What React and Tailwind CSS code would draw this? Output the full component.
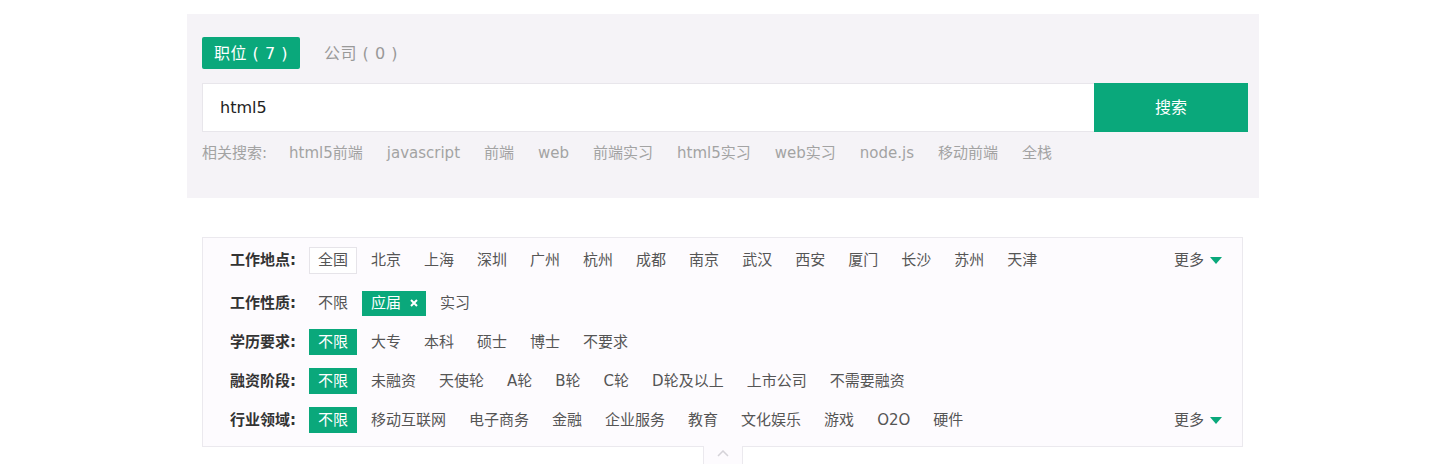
import { useState } from "react";

const GREEN = "bg-[#0aa87b]";

const related = ["html5前端", "javascript", "前端", "web", "前端实习", "html5实习", "web实习", "node.js", "移动前端", "全栈"];

const filters = [
  {
    label: "工作地点",
    items: ["全国", "北京", "上海", "深圳", "广州", "杭州", "成都", "南京", "武汉", "西安", "厦门", "长沙", "苏州", "天津"],
    active: "全国",
    style: "outline",
    more: true,
    mt: "mt-[9px]",
  },
  {
    label: "工作性质",
    items: ["不限", "应届", "实习"],
    active: "应届",
    style: "chip",
    mt: "mt-[16px]",
  },
  {
    label: "学历要求",
    items: ["不限", "大专", "本科", "硕士", "博士", "不要求"],
    active: "不限",
    style: "solid",
    mt: "mt-[13px]",
  },
  {
    label: "融资阶段",
    items: ["不限", "未融资", "天使轮", "A轮", "B轮", "C轮", "D轮及以上", "上市公司", "不需要融资"],
    active: "不限",
    style: "solid",
    mt: "mt-[13px]",
  },
  {
    label: "行业领域",
    items: ["不限", "移动互联网", "电子商务", "金融", "企业服务", "教育", "文化娱乐", "游戏", "O2O", "硬件"],
    active: "不限",
    style: "solid",
    more: true,
    mt: "mt-[13px]",
  },
];

const Caret = () => (
  <svg width="12" height="7" viewBox="0 0 12 7" className="ml-[6px]">
    <path d="M0 0 L12 0 L6 7 Z" fill="#0aa87b" />
  </svg>
);

const FilterItem = ({ text, active, style }) => {
  if (active && style === "outline") {
    return (
      <span className="h-[27px] px-[8px] flex items-center border border-[#e6e4e9] bg-white text-[#555]">
        {text}
      </span>
    );
  }
  if (active && style === "chip") {
    return (
      <span className={`h-[25px] pl-[9px] pr-[8px] flex items-center ${GREEN} text-white`}>
        {text}
        <svg width="8" height="8" viewBox="0 0 8 8" className="ml-[9px]">
          <path d="M1 1 L7 7 M7 1 L1 7" stroke="white" strokeWidth="2" />
        </svg>
      </span>
    );
  }
  if (active) {
    return (
      <span className={`h-[26px] px-[9px] flex items-center ${GREEN} text-white`}>{text}</span>
    );
  }
  return <span className="h-[26px] px-[9px] flex items-center text-[#555] cursor-pointer">{text}</span>;
};

export default function App() {
  const [tab, setTab] = useState("job");
  const [query, setQuery] = useState("html5");

  return (
    <div className="w-[1440px] h-[464px] bg-white overflow-hidden font-['DejaVu_Sans','Noto_Sans_CJK_SC',sans-serif]">
      <div className="w-[1072px] ml-[187px] pt-[14px]">
        {/* search panel */}
        <div className="bg-[#f5f3f7] h-[184px] pl-[15px] pr-[11px] pt-[23px]">
          <div className="flex items-center text-[16px]">
            <button
              onClick={() => setTab("job")}
              className={`h-[32px] w-[98px] flex items-center justify-center rounded-[2px] tracking-[0.5px] pt-[1px] ${tab === "job" ? GREEN + " text-white" : "text-[#999]"}`}
            >
              职位 ( 7 )
            </button>
            <button
              onClick={() => setTab("company")}
              className={`h-[32px] ml-[16px] px-[8px] flex items-center tracking-[0.5px] pt-[1px] ${tab === "company" ? GREEN + " text-white" : "text-[#999]"}`}
            >
              公司 ( 0 )
            </button>
          </div>
          <div className="flex mt-[14px] h-[49px]">
            <input
              value={query}
              onChange={(e) => setQuery(e.target.value)}
              className="flex-1 bg-white border border-[#e8e6eb] border-r-0 px-[17px] text-[16px] text-[#222] outline-none"
            />
            <button className={`w-[154px] ${GREEN} text-white text-[16px]`}>搜索</button>
          </div>
          <div className="flex items-center mt-[10px] text-[15px] text-[#a3a3a3]">
            <span className="mr-[22px]">相关搜索:</span>
            {related.map((r) => (
              <span key={r} className="mr-[24px] cursor-pointer">
                {r}
              </span>
            ))}
          </div>
        </div>

        {/* filters */}
        <div className="pl-[15px] pr-[16px] pt-[39px]">
          <div className="relative border border-[#ebe9ee] bg-[#fdfbfe] h-[210px] pl-[27px] pr-[20px] text-[15px]">
            {filters.map((f) => (
              <div key={f.label} className={`flex items-center ${f.mt}`}>
                <span className="w-[79px] font-bold text-[#333]">{f.label}:</span>
                <div className="flex items-center gap-[5px]">
                  {f.items.map((it) => (
                    <FilterItem key={it} text={it} active={it === f.active} style={f.style} />
                  ))}
                </div>
                {f.more && (
                  <span className="ml-auto flex items-center text-[#555] cursor-pointer">
                    更多
                    <Caret />
                  </span>
                )}
              </div>
            ))}
            <div className="absolute left-[500px] top-[208px] w-[40px] h-[20px] bg-[#fdfbfe] border-x border-[#ebe9ee] flex justify-center pt-[4px]">
              <svg width="12" height="7" viewBox="0 0 12 7">
                <path d="M1 6 L6 1 L11 6" fill="none" stroke="#d5d3d8" strokeWidth="1.5" />
              </svg>
            </div>
          </div>
        </div>
      </div>
    </div>
  );
}
